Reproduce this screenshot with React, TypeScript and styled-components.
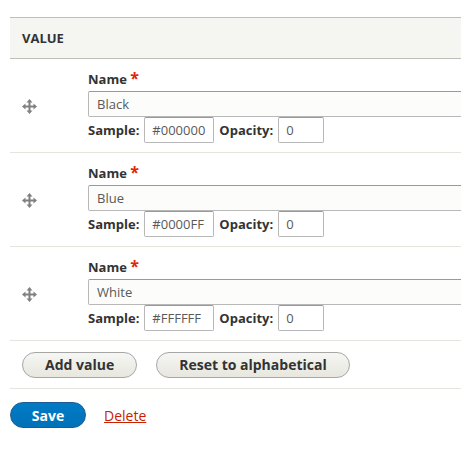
import styled, { createGlobalStyle } from 'styled-components';

const GlobalStyle = createGlobalStyle`
  body {
    margin: 0;
    overflow: hidden;
    background: #ffffff;
    font-family: "Open Sans", "Noto Sans", sans-serif;
    color: #333333;
  }
`;

const values = [
  { name: 'Black', sample: '#000000', opacity: '0' },
  { name: 'Blue', sample: '#0000FF', opacity: '0' },
  { name: 'White', sample: '#FFFFFF', opacity: '0' },
];

const DragHandle = () => (
  <svg width="15" height="15" viewBox="0 0 15 15">
    <g fill="#808080">
      <rect x="6.5" y="2" width="2" height="11" />
      <rect x="2" y="6.5" width="11" height="2" />
      <polygon points="7.5,0 10.5,3.5 4.5,3.5" />
      <polygon points="7.5,15 10.5,11.5 4.5,11.5" />
      <polygon points="0,7.5 3.5,4.5 3.5,10.5" />
      <polygon points="15,7.5 11.5,4.5 11.5,10.5" />
    </g>
  </svg>
);

const App = () => {
  return (
    <Page>
      <GlobalStyle />
      <Table>
        <Header>Value</Header>
        {values.map((v) => (
          <Row key={v.name}>
            <HandleCell>
              <DragHandle />
            </HandleCell>
            <Fields>
              <Label>
                Name <Required>*</Required>
              </Label>
              <TextInput defaultValue={v.name} />
              <Inline>
                <Label>Sample:</Label>
                <SmallInput width={70} defaultValue={v.sample} />
                <Label>Opacity:</Label>
                <SmallInput width={46} defaultValue={v.opacity} />
              </Inline>
            </Fields>
          </Row>
        ))}
        <ButtonRow>
          <Button>Add value</Button>
          <Button>Reset to alphabetical</Button>
        </ButtonRow>
      </Table>
      <Actions>
        <PrimaryButton>Save</PrimaryButton>
        <DeleteLink href="#">Delete</DeleteLink>
      </Actions>
    </Page>
  );
};

export default App;

const Page = styled.div`
  width: 461px;
  height: 449px;
  box-sizing: border-box;
  overflow: hidden;
  padding: 17px 0 0 10px;
`;

const Table = styled.div`
  width: 480px;
  border-top: 1px solid #bfbfba;
`;

const Header = styled.div`
  height: 40px;
  display: flex;
  align-items: center;
  padding-left: 12px;
  background: #f5f5f2;
  border-bottom: 1px solid #bfbfba;
  text-transform: uppercase;
  font-weight: bold;
  font-size: 13px;
  color: #333333;
`;

const Row = styled.div`
  display: flex;
  height: 93px;
  border-bottom: 1px solid #e6e4df;
`;

const HandleCell = styled.div`
  width: 78px;
  padding-left: 12px;
  box-sizing: border-box;
  display: flex;
  align-items: center;
  padding-top: 2px;
`;

const Fields = styled.div`
  flex: 1;
  display: flex;
  flex-direction: column;
  padding-top: 11px;
`;

const Label = styled.label`
  font-weight: bold;
  font-size: 13px;
  line-height: 17px;
  color: #333333;
  margin-bottom: 3px;
  white-space: nowrap;
`;

const Required = styled.span`
  color: #e32700;
  font-size: 16px;
`;

const TextInput = styled.input`
  box-sizing: border-box;
  height: 26px;
  width: 100%;
  padding: 4px 8px;
  border: 1px solid #b8b8b8;
  border-top-color: #999999;
  border-radius: 2px;
  background: #fcfcfa;
  font-family: inherit;
  font-size: 13px;
  color: #595959;
  outline: none;
`;

const Inline = styled.div`
  display: flex;
  align-items: center;
  gap: 5px;

  & > label {
    margin-bottom: 0;
  }
`;

const SmallInput = styled(TextInput)<{ width: number }>`
  width: ${(p) => p.width}px;
  padding: 4px 7px;
  background: #ffffff;
`;

const ButtonRow = styled.div`
  display: flex;
  gap: 19px;
  height: 47px;
  align-items: center;
  padding-left: 12px;
  border-bottom: 1px solid #e6e4df;
`;

const Button = styled.button`
  height: 26px;
  padding: 0 22px;
  border: 1px solid #a6a6a6;
  border-radius: 20px;
  background: linear-gradient(to bottom, #f6f6f3, #e7e7df);
  font-family: inherit;
  font-weight: bold;
  font-size: 14px;
  color: #333333;
`;

const Actions = styled.div`
  display: flex;
  align-items: center;
  gap: 18px;
  padding-top: 13px;
`;

const PrimaryButton = styled(Button)`
  width: 76px;
  padding: 0;
  background: linear-gradient(to bottom, #007bc6, #0071b8);
  border-color: #1e5c90;
  color: #ffffff;
`;

const DeleteLink = styled.a`
  font-size: 14px;
  color: #c72100;
  text-decoration: underline;
`;
